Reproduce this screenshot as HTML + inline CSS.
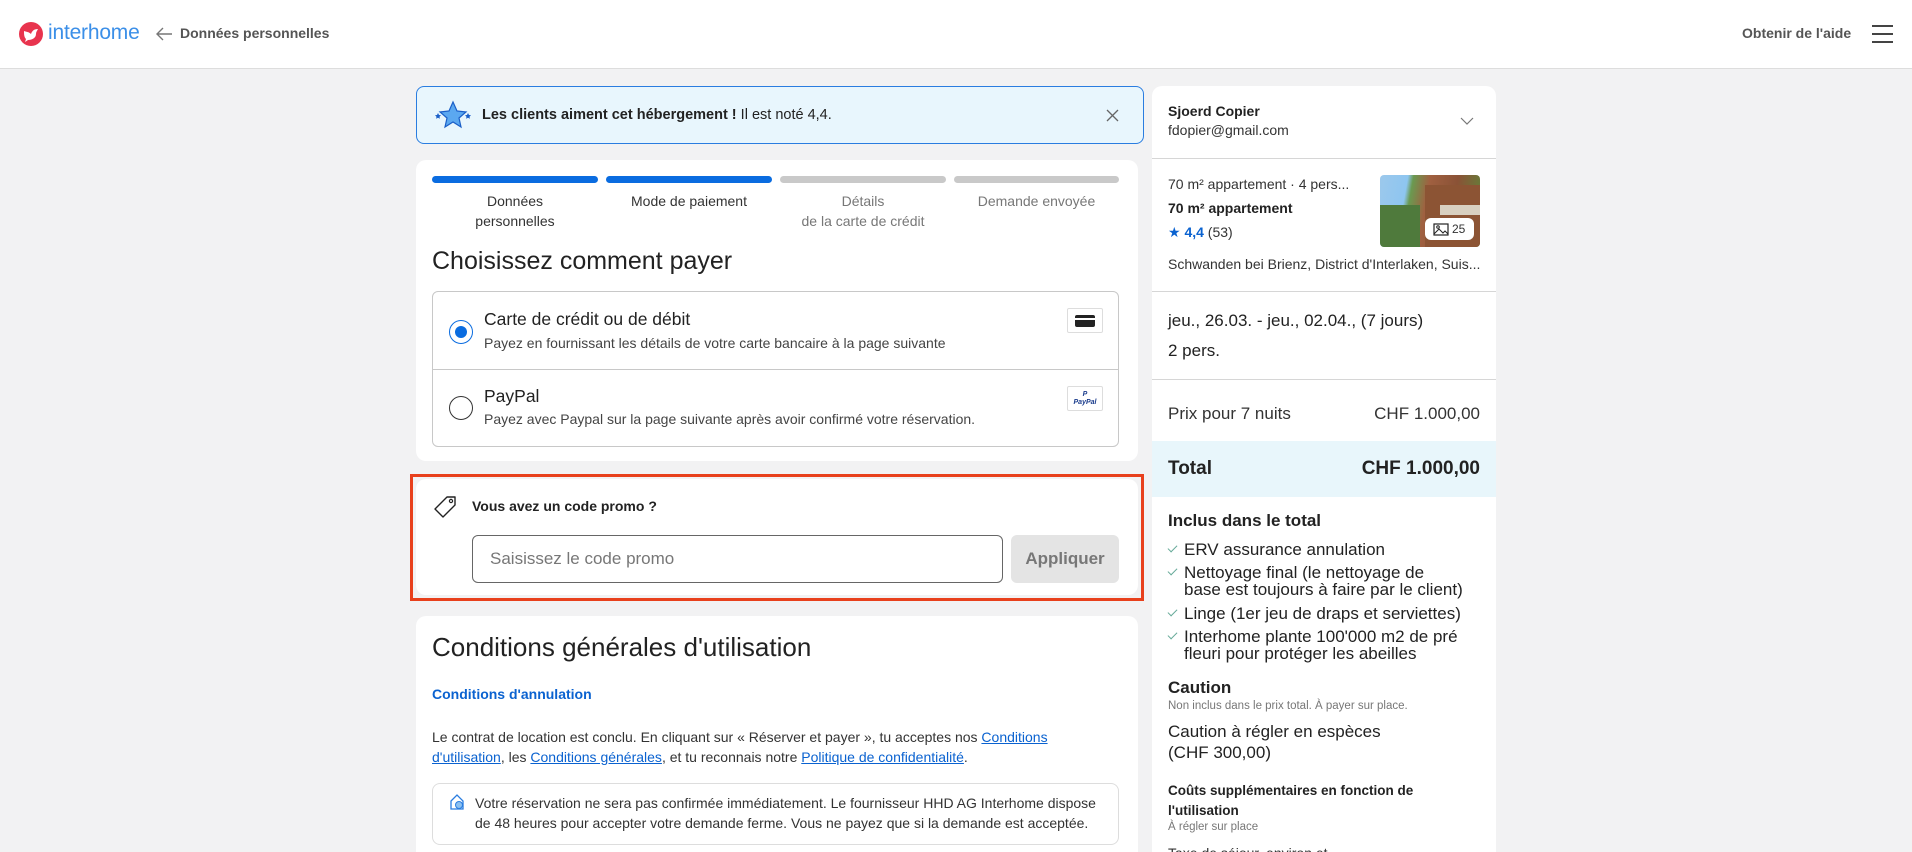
<!DOCTYPE html>
<html><head><meta charset="utf-8"><style>
*{margin:0;padding:0;box-sizing:border-box}
html,body{width:1912px;height:852px;overflow:hidden}
body{background:#f2f2f3;font-family:"Liberation Sans",Arial,sans-serif;color:#222;position:relative}
.a{position:absolute;white-space:nowrap}
.hdr{position:absolute;left:0;top:0;width:1912px;height:69px;background:#fff;border-bottom:1px solid #ddd}
.card{position:absolute;background:#fff;border-radius:10px}
.bar{position:absolute;top:176px;height:7px;border-radius:4px}
.lbl{position:absolute;font-size:14px;text-align:center;line-height:20px}
a{color:#0a62d0;text-decoration:underline}
.hr{position:absolute;left:1152px;width:344px;height:1px;background:#d6d6d6}
.li{position:absolute;left:1168px;font-size:17px;line-height:17px;color:#222}
.li:before{content:"";position:absolute;left:0;top:4px;width:8px;height:4px;border-left:1px solid #6a9;border-bottom:1px solid #6a9;transform:rotate(-45deg)}
.li span{display:block;padding-left:16px}
</style></head><body>
<div class="hdr"></div>
<svg class="a" style="left:19px;top:22px" width="24" height="24" viewBox="0 0 24 24"><circle cx="12" cy="12" r="12" fill="#e8344e"/><path d="M5 9c3 1 5 1 7 3 1-3 3-5 7-5-1 2-2 3-2 5 0 4-4 6-8 6l-3 2 1-3C5 15 5 12 5 9z" fill="#fff"/></svg>
<div class="a" style="left:48px;top:21px;font-size:21px;color:#3b8fe8;letter-spacing:-0.2px">interhome</div>
<svg class="a" style="left:155px;top:26px" width="18" height="16" viewBox="0 0 18 16"><path d="M17 8H2M8 2L2 8l6 6" fill="none" stroke="#777" stroke-width="1.4"/></svg>
<div class="a" style="left:180px;top:25px;font-size:14px;font-weight:bold;color:#555">Données personnelles</div>
<div class="a" style="left:1742px;top:25px;font-size:14px;font-weight:bold;color:#555">Obtenir de l'aide</div>
<div class="a" style="left:1872px;top:25px;width:21px;height:1.5px;background:#444"></div>
<div class="a" style="left:1872px;top:33px;width:21px;height:1.5px;background:#444"></div>
<div class="a" style="left:1872px;top:41px;width:21px;height:1.5px;background:#444"></div>

<div class="a" style="left:416px;top:86px;width:728px;height:58px;background:#e8f6fd;border:1.5px solid #2a7de0;border-radius:8px"></div>
<svg class="a" style="left:434px;top:100px" width="38" height="30" viewBox="0 0 38 30"><path d="M19 2l4 9 9 1-7 6 2 9-8-5-8 5 2-9-7-6 9-1z" fill="#5ba8f0" stroke="#1a5fc8" stroke-width="1.2"/><path d="M4 13l1 2 2 .3-1.5 1.4.4 2L4 17.7 2.1 18.7l.4-2L1 15.3l2-.3z" fill="#1a5fc8"/><path d="M34 13l1 2 2 .3-1.5 1.4.4 2-1.9-1-1.9 1 .4-2-1.5-1.4 2-.3z" fill="#1a5fc8"/></svg>
<div class="a" style="left:482px;top:107px;font-size:14.5px;color:#222"><b>Les clients aiment cet hébergement !</b> Il est noté 4,4.</div>
<svg class="a" style="left:1106px;top:109px" width="13" height="13" viewBox="0 0 13 13"><path d="M1 1l11 11M12 1L1 12" stroke="#666" stroke-width="1.3"/></svg>

<div class="card" style="left:416px;top:160px;width:722px;height:301px"></div>
<div class="bar" style="left:432px;width:166px;background:#0a6ce0"></div>
<div class="bar" style="left:606px;width:166px;background:#0a6ce0"></div>
<div class="bar" style="left:780px;width:166px;background:#c9c9c9"></div>
<div class="bar" style="left:954px;width:165px;background:#c9c9c9"></div>
<div class="lbl" style="left:432px;top:191px;width:166px;color:#333">Données<br>personnelles</div>
<div class="lbl" style="left:606px;top:191px;width:166px;color:#333">Mode de paiement</div>
<div class="lbl" style="left:780px;top:191px;width:166px;color:#777">Détails<br>de la carte de crédit</div>
<div class="lbl" style="left:954px;top:191px;width:165px;color:#777">Demande envoyée</div>
<div class="a" style="left:432px;top:247px;font-size:25px;color:#222">Choisissez comment payer</div>
<div class="a" style="left:432px;top:291px;width:687px;height:156px;border:1px solid #c8c8c8;border-radius:6px"></div>
<div class="a" style="left:433px;top:369px;width:685px;height:1px;background:#c8c8c8"></div>
<div class="a" style="left:449px;top:320px;width:24px;height:24px;border:1.5px solid #0a6ce0;border-radius:50%"></div>
<div class="a" style="left:455px;top:326px;width:12px;height:12px;background:#0a6ce0;border-radius:50%"></div>
<div class="a" style="left:484px;top:309px;font-size:17.5px;color:#222">Carte de crédit ou de débit</div>
<div class="a" style="left:484px;top:335px;font-size:14px;color:#444">Payez en fournissant les détails de votre carte bancaire à la page suivante</div>
<div class="a" style="left:1067px;top:308px;width:36px;height:25px;border:1px solid #ddd;border-radius:2px"></div>
<div class="a" style="left:1075px;top:315px;width:20px;height:12px;background:#222;border-radius:2px"></div>
<div class="a" style="left:1075px;top:318px;width:20px;height:2px;background:#fff"></div>
<div class="a" style="left:449px;top:396px;width:24px;height:24px;border:1.5px solid #333;border-radius:50%"></div>
<div class="a" style="left:484px;top:386px;font-size:17.5px;color:#222">PayPal</div>
<div class="a" style="left:484px;top:411px;font-size:14px;color:#444">Payez avec Paypal sur la page suivante après avoir confirmé votre réservation.</div>
<div class="a" style="left:1067px;top:386px;width:36px;height:25px;border:1px solid #ddd;border-radius:2px;font-size:7px;color:#1a3c8c;font-style:italic;font-weight:bold;text-align:center;line-height:8px;padding-top:4px">P<br>PayPal</div>

<div class="card" style="left:416px;top:479px;width:722px;height:116px"></div>
<div class="a" style="left:410px;top:474px;width:734px;height:127px;border:3px solid #e8401c"></div>
<svg class="a" style="left:432px;top:495px" width="26" height="24" viewBox="0 0 26 24"><path d="M15 2h8v8L11 22 3 14z" fill="none" stroke="#222" stroke-width="1.4" stroke-linejoin="round"/><circle cx="19" cy="6" r="1.6" fill="none" stroke="#222" stroke-width="1.2"/></svg>
<div class="a" style="left:472px;top:498px;font-size:14px;font-weight:bold;color:#222">Vous avez un code promo ?</div>
<div class="a" style="left:472px;top:535px;width:531px;height:48px;border:1px solid #666;border-radius:6px;background:#fff"></div>
<div class="a" style="left:490px;top:549px;font-size:17px;color:#777">Saisissez le code promo</div>
<div class="a" style="left:1011px;top:535px;width:108px;height:48px;background:#e4e4e4;border-radius:6px;text-align:center;line-height:48px;font-size:17px;font-weight:bold;color:#777">Appliquer</div>

<div class="card" style="left:416px;top:616px;width:722px;height:250px"></div>
<div class="a" style="left:432px;top:632px;font-size:26px;color:#222">Conditions générales d'utilisation</div>
<div class="a" style="left:432px;top:686px;font-size:14px;font-weight:bold;color:#0a62d0">Conditions d'annulation</div>
<div class="a" style="left:432px;top:727px;font-size:14px;color:#333;line-height:20px">Le contrat de location est conclu. En cliquant sur « Réserver et payer », tu acceptes nos <a>Conditions</a><br><a>d'utilisation</a>, les <a>Conditions générales</a>, et tu reconnais notre <a>Politique de confidentialité</a>.</div>
<div class="a" style="left:432px;top:783px;width:687px;height:62px;border:1px solid #ddd;border-radius:8px"></div>
<svg class="a" style="left:449px;top:793px" width="16" height="18" viewBox="0 0 16 18"><path d="M2 8l6-6 6 6v8H2z" fill="none" stroke="#2a7de0" stroke-width="1.3"/><circle cx="10" cy="12" r="3.5" fill="#8cc0f0" stroke="#2a7de0"/></svg>
<div class="a" style="left:475px;top:793px;font-size:14px;color:#333;line-height:20px">Votre réservation ne sera pas confirmée immédiatement. Le fournisseur HHD AG Interhome dispose<br>de 48 heures pour accepter votre demande ferme. Vous ne payez que si la demande est acceptée.</div>

<div class="card" style="left:1152px;top:86px;width:344px;height:800px"></div>
<div class="a" style="left:1168px;top:103px;font-size:14px;font-weight:bold;color:#222">Sjoerd Copier</div>
<div class="a" style="left:1168px;top:122px;font-size:14px;color:#333">fdopier@gmail.com</div>
<svg class="a" style="left:1460px;top:117px" width="14" height="8" viewBox="0 0 14 8"><path d="M1 1l6 6 6-6" fill="none" stroke="#777" stroke-width="1.2"/></svg>
<div class="hr" style="top:158px"></div>
<div class="a" style="left:1168px;top:176px;font-size:14px;color:#333">70 m² appartement · 4 pers...</div>
<div class="a" style="left:1168px;top:200px;font-size:14px;font-weight:bold;color:#222">70 m² appartement</div>
<div class="a" style="left:1168px;top:224px;font-size:14px;color:#333"><span style="color:#0a62d0">★ <b>4,4</b></span> (53)</div>
<div class="a" style="left:1380px;top:175px;width:100px;height:72px;border-radius:4px;overflow:hidden;background:linear-gradient(100deg,#9cc8ec 0%,#8ec6f0 25%,#6a9a50 30%,#a06040 45%,#8a5236 70%,#5a8a3a 100%)">
<div style="position:absolute;left:0;top:30px;width:40px;height:42px;background:#4f7a3c"></div>
<div style="position:absolute;left:45px;top:10px;width:55px;height:62px;background:#8c5434"></div>
<div style="position:absolute;left:60px;top:30px;width:40px;height:10px;background:#d9d0c0"></div>
</div>
<div class="a" style="left:1425px;top:218px;width:49px;height:22px;background:#fff;border-radius:6px;font-size:12px;color:#333;line-height:22px;padding-left:27px">25</div>
<svg class="a" style="left:1433px;top:223px" width="16" height="13" viewBox="0 0 16 13"><rect x="1" y="1" width="14" height="11" fill="none" stroke="#222" stroke-width="1.2"/><path d="M1 11l5-5 4 4 2-2 3 3" fill="none" stroke="#222"/><circle cx="5" cy="4" r="1.3" fill="none" stroke="#222"/></svg>
<div class="a" style="left:1168px;top:256px;font-size:14px;color:#333">Schwanden bei Brienz, District d'Interlaken, Suis...</div>
<div class="hr" style="top:291px"></div>
<div class="a" style="left:1168px;top:311px;font-size:17px;color:#222">jeu., 26.03. - jeu., 02.04., (7 jours)</div>
<div class="a" style="left:1168px;top:341px;font-size:17px;color:#222">2 pers.</div>
<div class="hr" style="top:379px"></div>
<div class="a" style="left:1168px;top:404px;font-size:17px;color:#333">Prix pour 7 nuits</div>
<div class="a" style="left:1372px;top:404px;width:108px;text-align:right;font-size:17px;color:#333">CHF 1.000,00</div>
<div class="a" style="left:1152px;top:441px;width:344px;height:56px;background:#e8f6fb"></div>
<div class="a" style="left:1168px;top:458px;font-size:19px;font-weight:bold;color:#222">Total</div>
<div class="a" style="left:1330px;top:458px;width:150px;text-align:right;font-size:19px;font-weight:bold;color:#222">CHF 1.000,00</div>
<div class="a" style="left:1168px;top:511px;font-size:17px;font-weight:bold;color:#222">Inclus dans le total</div>
<div class="li" style="top:541px"><span>ERV assurance annulation</span></div>
<div class="li" style="top:564px"><span>Nettoyage final (le nettoyage de<br>base est toujours à faire par le client)</span></div>
<div class="li" style="top:605px"><span>Linge (1er jeu de draps et serviettes)</span></div>
<div class="li" style="top:628px"><span>Interhome plante 100'000 m2 de pré<br>fleuri pour protéger les abeilles</span></div>
<div class="a" style="left:1168px;top:678px;font-size:17px;font-weight:bold;color:#222">Caution</div>
<div class="a" style="left:1168px;top:700px;font-size:11.5px;color:#777">Non inclus dans le prix total. À payer sur place.</div>
<div class="a" style="left:1168px;top:721px;font-size:17px;color:#222;line-height:21px">Caution à régler en espèces<br>(CHF 300,00)</div>
<div class="a" style="left:1168px;top:781px;font-size:13.5px;font-weight:bold;color:#222;line-height:20px">Coûts supplémentaires en fonction de<br>l'utilisation</div>
<div class="a" style="left:1168px;top:821px;font-size:11.5px;color:#777">À régler sur place</div>
<div class="a" style="left:1168px;top:845px;font-size:14px;color:#333">Taxe de séjour, environ et...</div>
</body></html>
